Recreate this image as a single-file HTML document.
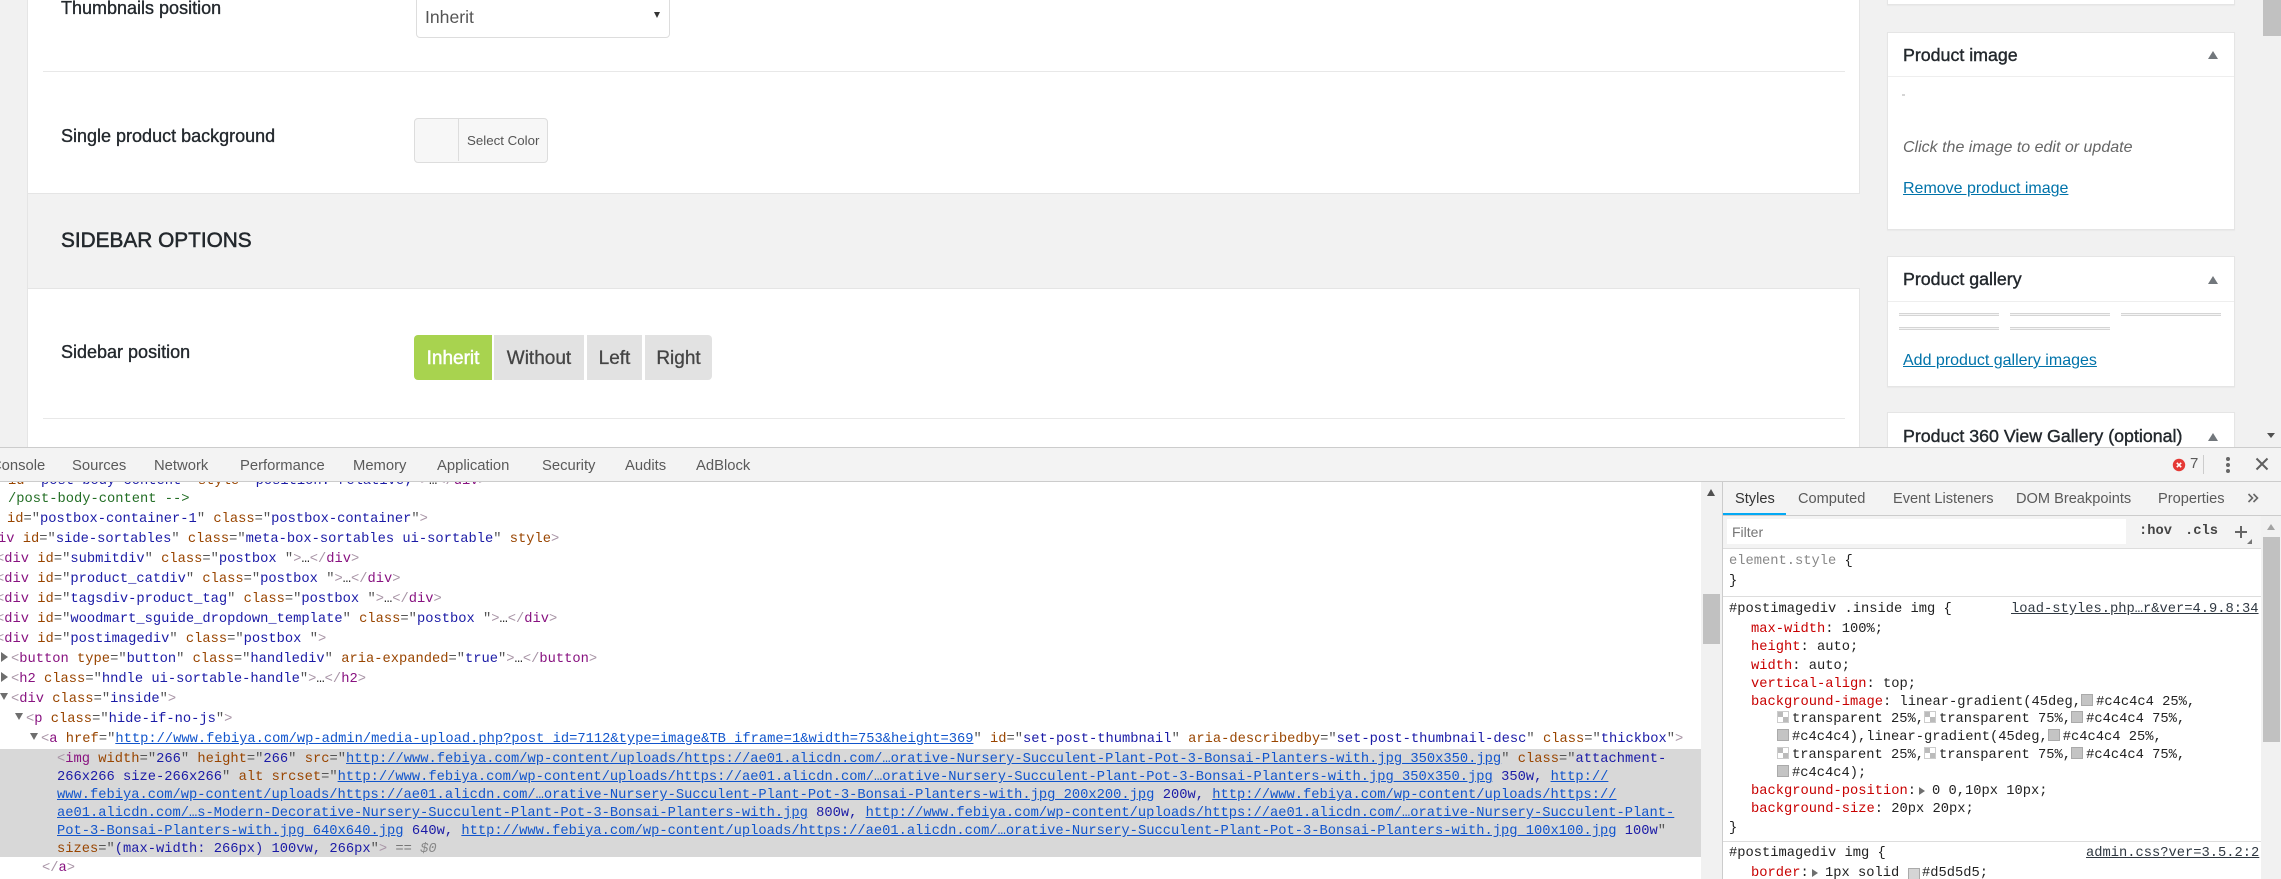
<!DOCTYPE html>
<html><head><meta charset="utf-8"><title>Product</title>
<style>
html,body{margin:0;padding:0;width:2281px;height:879px;overflow:hidden;background:#f1f1f1;}
body{position:relative;font-family:"Liberation Sans",sans-serif;}
.b{position:absolute;box-sizing:border-box;}
.x{position:absolute;white-space:pre;}
.lb{font-size:18px;line-height:24px;color:#23282d;-webkit-text-stroke:.35px #23282d;}
.pt{font-size:17.8px;line-height:24px;color:#23282d;-webkit-text-stroke:.4px #23282d;}
.bt{position:absolute;top:335px;height:45px;background:#e2e2e2;color:#444;font-size:19px;line-height:47px;text-align:center;-webkit-text-stroke:.3px #444;}
.lk{font-size:16px;line-height:22px;color:#0073aa;text-decoration:underline;}
.tab{position:absolute;top:456px;font-size:14.8px;line-height:20px;color:#5a5a5a;white-space:pre;}
.st{position:absolute;top:489px;font-size:14.6px;line-height:20px;color:#5a5a5a;white-space:pre;}
.m{position:absolute;white-space:pre;font-family:"Liberation Mono",monospace;font-size:13.75px;line-height:18px;color:#222;margin-top:1px;}
.t{color:#881280}.a{color:#994500}.v{color:#1a1aa6}.g{color:#a894a6}.q{color:#555}
.l{color:#1155cc;text-decoration:underline}
.p{color:#c80000}
.s{display:inline-block;width:10px;height:10px;border:1px solid #aaa;background:#c4c4c4;margin-right:3px;vertical-align:-1px}
.s.c{background:linear-gradient(#bbb,#bbb) 0 0/50% 50% no-repeat,linear-gradient(#bbb,#bbb) 100% 100%/50% 50% no-repeat,#fff;border-color:#ccc}
.tri{position:absolute;width:0;height:0;border-style:solid;border-color:transparent;}
.bar{position:absolute;height:3px;background:#f4f4f4;border-top:1px solid #d5d5d5;border-bottom:1px solid #d5d5d5;box-sizing:border-box;width:100px;}
.pb{position:absolute;left:1887px;width:348px;background:#fff;border:1px solid #e5e5e5;box-sizing:border-box;box-shadow:0 1px 1px rgba(0,0,0,.04);}
</style></head><body>

<!-- main panel -->
<div class="b" style="left:0;top:0;width:28px;height:447px;background:#f1f1f1;border-right:1px solid #e5e5e5"></div>
<div class="b" style="left:28px;top:0;width:1832px;height:447px;background:#fff;border-right:1px solid #e5e5e5"></div>

<div class="x lb" style="left:61px;top:-4px">Thumbnails position</div>
<div class="b" style="left:416px;top:-5px;width:254px;height:43px;border:1px solid #ddd;border-radius:4px;background:#fff"></div>
<div class="x" style="left:425px;top:6px;font-size:17.6px;line-height:23px;color:#555">Inherit</div>
<div class="tri" style="left:654px;top:12px;border-width:6px 3.5px 0 3.5px;border-top-color:#333"></div>
<div class="b" style="left:43px;top:71px;width:1802px;height:1px;background:#e8e8e8"></div>

<div class="x lb" style="left:61px;top:124px">Single product background</div>
<div class="b" style="left:414px;top:118px;width:134px;height:45px;border:1px solid #ddd;border-radius:4px;background:#f7f7f7"></div>
<div class="b" style="left:458px;top:119px;width:1px;height:42px;background:#ddd"></div>
<div class="x" style="left:467px;top:131px;font-size:13.3px;line-height:20px;color:#555">Select Color</div>

<div class="b" style="left:28px;top:193px;width:1832px;height:96px;background:#f2f2f2;border-top:1px solid #e5e5e5;border-bottom:1px solid #e5e5e5"></div>
<div class="x" style="left:61px;top:227px;font-size:20.8px;line-height:28px;color:#23282d;-webkit-text-stroke:.5px #23282d">SIDEBAR OPTIONS</div>

<div class="x lb" style="left:61px;top:340px">Sidebar position</div>
<div class="bt" style="left:414px;width:78px;background:#a8d34f;color:#fff;border-radius:4px 0 0 4px;-webkit-text-stroke:.45px #fff">Inherit</div>
<div class="bt" style="left:494px;width:90px">Without</div>
<div class="bt" style="left:587px;width:55px">Left</div>
<div class="bt" style="left:645px;width:67px;border-radius:0 4px 4px 0">Right</div>
<div class="b" style="left:43px;top:418px;width:1802px;height:1px;background:#e8e8e8"></div>

<!-- side boxes -->
<div class="pb" style="top:-10px;height:15px"></div>

<div class="pb" style="top:32px;height:198px"></div>
<div class="b" style="left:1888px;top:76px;width:346px;height:1px;background:#eee"></div>
<div class="x pt" style="left:1903px;top:43px">Product image</div>
<div class="tri" style="left:2208px;top:51px;border-width:0 5px 8px 5px;border-bottom-color:#72777c"></div>
<div class="b" style="left:1902px;top:94px;width:3px;height:2px;background:#d5d5d5"></div>
<div class="x" style="left:1903px;top:137px;font-size:16px;line-height:22px;font-style:italic;color:#666">Click the image to edit or update</div>
<div class="x lk" style="left:1903px;top:178px">Remove product image</div>

<div class="pb" style="top:256px;height:131px"></div>
<div class="b" style="left:1888px;top:301px;width:346px;height:1px;background:#eee"></div>
<div class="x pt" style="left:1903px;top:267px">Product gallery</div>
<div class="tri" style="left:2208px;top:276px;border-width:0 5px 8px 5px;border-bottom-color:#72777c"></div>
<div class="bar" style="left:1899px;top:313px"></div>
<div class="bar" style="left:2010px;top:313px"></div>
<div class="bar" style="left:2121px;top:313px"></div>
<div class="bar" style="left:1899px;top:327px"></div>
<div class="bar" style="left:2010px;top:327px"></div>
<div class="x lk" style="left:1903px;top:350px">Add product gallery images</div>

<div class="pb" style="top:412px;height:60px"></div>
<div class="x pt" style="left:1903px;top:424px">Product 360 View Gallery (optional)</div>
<div class="tri" style="left:2208px;top:433px;border-width:0 5px 8px 5px;border-bottom-color:#72777c"></div>

<!-- page scrollbar -->
<div class="b" style="left:2263px;top:0;width:18px;height:36px;background:#c1c1c1"></div>
<div class="tri" style="left:2267px;top:433px;border-width:5px 4.5px 0 4.5px;border-top-color:#505050"></div>

<!-- devtools -->
<div class="b" style="left:0;top:447px;width:2281px;height:432px;background:#fff"></div>

<!-- elements panel -->
<div class="b" style="left:0;top:749px;width:1701px;height:108px;background:#d8d8d8"></div>

<div class="m" style="left:8px;top:472px"><span class="a">id</span><span class="q">="</span><span class="v">post-body-content</span><span class="q">"</span> <span class="a">style</span><span class="q">="</span><span class="v">position: relative;</span><span class="q">"</span><span class="g">&gt;</span>…<span class="g">&lt;/</span><span class="t">div</span><span class="g">&gt;</span></div>
<div class="m" style="left:8px;top:490px;color:#236e25">/post-body-content --&gt;</div>
<div class="m" style="left:7px;top:510px"><span class="a">id</span><span class="q">="</span><span class="v">postbox-container-1</span><span class="q">"</span> <span class="a">class</span><span class="q">="</span><span class="v">postbox-container</span><span class="q">"</span><span class="g">&gt;</span></div>
<div class="m" style="left:-2px;top:530px"><span class="t">iv</span> <span class="a">id</span><span class="q">="</span><span class="v">side-sortables</span><span class="q">"</span> <span class="a">class</span><span class="q">="</span><span class="v">meta-box-sortables ui-sortable</span><span class="q">"</span> <span class="a">style</span><span class="g">&gt;</span></div>
<div class="m" style="left:-4px;top:550px"><span class="g">&lt;</span><span class="t">div</span> <span class="a">id</span><span class="q">="</span><span class="v">submitdiv</span><span class="q">"</span> <span class="a">class</span><span class="q">="</span><span class="v">postbox </span><span class="q">"</span><span class="g">&gt;</span>…<span class="g">&lt;/</span><span class="t">div</span><span class="g">&gt;</span></div>
<div class="m" style="left:-4px;top:570px"><span class="g">&lt;</span><span class="t">div</span> <span class="a">id</span><span class="q">="</span><span class="v">product_catdiv</span><span class="q">"</span> <span class="a">class</span><span class="q">="</span><span class="v">postbox </span><span class="q">"</span><span class="g">&gt;</span>…<span class="g">&lt;/</span><span class="t">div</span><span class="g">&gt;</span></div>
<div class="m" style="left:-4px;top:590px"><span class="g">&lt;</span><span class="t">div</span> <span class="a">id</span><span class="q">="</span><span class="v">tagsdiv-product_tag</span><span class="q">"</span> <span class="a">class</span><span class="q">="</span><span class="v">postbox </span><span class="q">"</span><span class="g">&gt;</span>…<span class="g">&lt;/</span><span class="t">div</span><span class="g">&gt;</span></div>
<div class="m" style="left:-4px;top:610px"><span class="g">&lt;</span><span class="t">div</span> <span class="a">id</span><span class="q">="</span><span class="v">woodmart_sguide_dropdown_template</span><span class="q">"</span> <span class="a">class</span><span class="q">="</span><span class="v">postbox </span><span class="q">"</span><span class="g">&gt;</span>…<span class="g">&lt;/</span><span class="t">div</span><span class="g">&gt;</span></div>
<div class="m" style="left:-4px;top:630px"><span class="g">&lt;</span><span class="t">div</span> <span class="a">id</span><span class="q">="</span><span class="v">postimagediv</span><span class="q">"</span> <span class="a">class</span><span class="q">="</span><span class="v">postbox </span><span class="q">"</span><span class="g">&gt;</span></div>
<div class="tri" style="left:1px;top:652px;border-width:5px 0 5px 7px;border-left-color:#6e6e6e"></div>
<div class="m" style="left:11px;top:650px"><span class="g">&lt;</span><span class="t">button</span> <span class="a">type</span><span class="q">="</span><span class="v">button</span><span class="q">"</span> <span class="a">class</span><span class="q">="</span><span class="v">handlediv</span><span class="q">"</span> <span class="a">aria-expanded</span><span class="q">="</span><span class="v">true</span><span class="q">"</span><span class="g">&gt;</span>…<span class="g">&lt;/</span><span class="t">button</span><span class="g">&gt;</span></div>
<div class="tri" style="left:1px;top:672px;border-width:5px 0 5px 7px;border-left-color:#6e6e6e"></div>
<div class="m" style="left:11px;top:670px"><span class="g">&lt;</span><span class="t">h2</span> <span class="a">class</span><span class="q">="</span><span class="v">hndle ui-sortable-handle</span><span class="q">"</span><span class="g">&gt;</span>…<span class="g">&lt;/</span><span class="t">h2</span><span class="g">&gt;</span></div>
<div class="tri" style="left:0;top:693px;border-width:7px 4.5px 0 4.5px;border-top-color:#6e6e6e"></div>
<div class="m" style="left:11px;top:690px"><span class="g">&lt;</span><span class="t">div</span> <span class="a">class</span><span class="q">="</span><span class="v">inside</span><span class="q">"</span><span class="g">&gt;</span></div>
<div class="tri" style="left:15px;top:713px;border-width:7px 4.5px 0 4.5px;border-top-color:#6e6e6e"></div>
<div class="m" style="left:26px;top:710px"><span class="g">&lt;</span><span class="t">p</span> <span class="a">class</span><span class="q">="</span><span class="v">hide-if-no-js</span><span class="q">"</span><span class="g">&gt;</span></div>
<div class="tri" style="left:30px;top:733px;border-width:7px 4.5px 0 4.5px;border-top-color:#6e6e6e"></div>
<div class="m" style="left:41px;top:730px"><span class="g">&lt;</span><span class="t">a</span> <span class="a">href</span><span class="q">="</span><span class="l">http://www.febiya.com/wp-admin/media-upload.php?post_id=7112&amp;type=image&amp;TB_iframe=1&amp;width=753&amp;height=369</span><span class="q">"</span> <span class="a">id</span><span class="q">="</span><span class="v">set-post-thumbnail</span><span class="q">"</span> <span class="a">aria-describedby</span><span class="q">="</span><span class="v">set-post-thumbnail-desc</span><span class="q">"</span> <span class="a">class</span><span class="q">="</span><span class="v">thickbox</span><span class="q">"</span><span class="g">&gt;</span></div>

<div class="m" style="left:57px;top:750px"><span class="g">&lt;</span><span class="t">img</span> <span class="a">width</span><span class="q">="</span><span class="v">266</span><span class="q">"</span> <span class="a">height</span><span class="q">="</span><span class="v">266</span><span class="q">"</span> <span class="a">src</span><span class="q">="</span><span class="l">http://www.febiya.com/wp-content/uploads/https://ae01.alicdn.com/…orative-Nursery-Succulent-Plant-Pot-3-Bonsai-Planters-with.jpg_350x350.jpg</span><span class="q">"</span> <span class="a">class</span><span class="q">="</span><span class="v">attachment-</span></div>
<div class="m" style="left:57px;top:768px"><span class="v">266x266 size-266x266</span><span class="q">"</span> <span class="a">alt</span> <span class="a">srcset</span><span class="q">="</span><span class="l">http://www.febiya.com/wp-content/uploads/https://ae01.alicdn.com/…orative-Nursery-Succulent-Plant-Pot-3-Bonsai-Planters-with.jpg_350x350.jpg</span><span class="v"> 350w, </span><span class="l">http://</span></div>
<div class="m" style="left:57px;top:786px"><span class="l">www.febiya.com/wp-content/uploads/https://ae01.alicdn.com/…orative-Nursery-Succulent-Plant-Pot-3-Bonsai-Planters-with.jpg_200x200.jpg</span><span class="v"> 200w, </span><span class="l">http://www.febiya.com/wp-content/uploads/https://</span></div>
<div class="m" style="left:57px;top:804px"><span class="l">ae01.alicdn.com/…s-Modern-Decorative-Nursery-Succulent-Plant-Pot-3-Bonsai-Planters-with.jpg</span><span class="v"> 800w, </span><span class="l">http://www.febiya.com/wp-content/uploads/https://ae01.alicdn.com/…orative-Nursery-Succulent-Plant-</span></div>
<div class="m" style="left:57px;top:822px"><span class="l">Pot-3-Bonsai-Planters-with.jpg_640x640.jpg</span><span class="v"> 640w, </span><span class="l">http://www.febiya.com/wp-content/uploads/https://ae01.alicdn.com/…orative-Nursery-Succulent-Plant-Pot-3-Bonsai-Planters-with.jpg_100x100.jpg</span><span class="v"> 100w</span><span class="q">"</span></div>
<div class="m" style="left:57px;top:840px"><span class="a">sizes</span><span class="q">="</span><span class="v">(max-width: 266px) 100vw, 266px</span><span class="q">"</span><span class="g">&gt;</span> <span style="color:#777">==</span> <span style="color:#888;font-style:italic">$0</span></div>
<div class="m" style="left:42px;top:859px"><span class="g">&lt;/</span><span class="t">a</span><span class="g">&gt;</span></div>

<!-- elements scrollbar -->
<div class="b" style="left:1701px;top:482px;width:21px;height:397px;background:#f1f1f1"></div>
<div class="tri" style="left:1707px;top:489px;border-width:0 4.5px 7px 4.5px;border-bottom-color:#505050"></div>
<div class="b" style="left:1703px;top:594px;width:17px;height:50px;background:#c1c1c1"></div>
<div class="b" style="left:1722px;top:482px;width:1px;height:397px;background:#ccc"></div>

<!-- toolbar -->
<div class="b" style="left:0;top:447px;width:2281px;height:35px;background:#f3f3f3;border-top:1px solid #ccc;border-bottom:1px solid #ccc"></div>
<div class="tab" style="left:-9px">Console</div>
<div class="tab" style="left:72px">Sources</div>
<div class="tab" style="left:154px">Network</div>
<div class="tab" style="left:240px">Performance</div>
<div class="tab" style="left:353px">Memory</div>
<div class="tab" style="left:437px">Application</div>
<div class="tab" style="left:542px">Security</div>
<div class="tab" style="left:625px">Audits</div>
<div class="tab" style="left:696px">AdBlock</div>
<svg style="position:absolute;left:2172px;top:458px" width="14" height="14" viewBox="0 0 14 14"><circle cx="7" cy="7" r="6.2" fill="#e53935"/><path d="M4.8 4.8L9.2 9.2M9.2 4.8L4.8 9.2" stroke="#fff" stroke-width="1.6"/></svg>
<div class="x" style="left:2190px;top:454px;font-size:15px;line-height:20px;color:#5a5a5a">7</div>
<div class="b" style="left:2203px;top:455px;width:1px;height:19px;background:#ccc"></div>
<svg style="position:absolute;left:2224px;top:456px" width="8" height="18" viewBox="0 0 8 18"><circle cx="4" cy="3" r="2" fill="#666"/><circle cx="4" cy="9" r="2" fill="#666"/><circle cx="4" cy="15" r="2" fill="#666"/></svg>
<svg style="position:absolute;left:2255px;top:457px" width="14" height="14" viewBox="0 0 14 14"><path d="M1.5 1.5L12.5 12.5M12.5 1.5L1.5 12.5" stroke="#5f5f5f" stroke-width="2"/></svg>

<!-- styles panel -->
<div class="b" style="left:1723px;top:482px;width:558px;height:34px;background:#f3f3f3;border-bottom:1px solid #ccc"></div>
<div class="b" style="left:1723px;top:513px;width:63px;height:2px;background:#03a9f4"></div>
<div class="st" style="left:1735px;color:#333">Styles</div>
<div class="st" style="left:1798px">Computed</div>
<div class="st" style="left:1893px">Event Listeners</div>
<div class="st" style="left:2016px">DOM Breakpoints</div>
<div class="st" style="left:2158px">Properties</div>
<svg style="position:absolute;left:2247px;top:492px" width="12" height="12" viewBox="0 0 12 12"><path d="M1.5 2L5.5 6L1.5 10M6.5 2L10.5 6L6.5 10" fill="none" stroke="#666" stroke-width="1.6"/></svg>
<div class="b" style="left:1723px;top:516px;width:558px;height:33px;background:#f3f3f3;border-bottom:1px solid #ddd"></div>
<div class="b" style="left:1727px;top:519px;width:399px;height:25px;background:#fff"></div>
<div class="x" style="left:1732px;top:522px;font-size:14px;line-height:20px;color:#757575">Filter</div>
<div class="x" style="left:2139px;top:523px;font-family:'Liberation Mono',monospace;font-weight:bold;font-size:13.75px;line-height:18px;color:#444">:hov</div>
<div class="x" style="left:2185px;top:523px;font-family:'Liberation Mono',monospace;font-weight:bold;font-size:13.75px;line-height:18px;color:#444">.cls</div>
<svg style="position:absolute;left:2234px;top:525px" width="14" height="14" viewBox="0 0 14 14"><path d="M7 1V13M1 7H13" stroke="#666" stroke-width="2"/></svg>
<div class="tri" style="left:2247px;top:539px;border-width:0 0 5px 5px;border-bottom-color:#777"></div>

<div class="b" style="left:1723px;top:549px;width:538px;height:330px;background:#fff"></div>

<div class="m" style="left:1729px;top:552px"><span style="color:#888">element.style</span> {</div>
<div class="m" style="left:1729px;top:572px">}</div>
<div class="b" style="left:1723px;top:596px;width:538px;height:1px;background:#ddd"></div>
<div class="m" style="left:1729px;top:600px;color:#222">#postimagediv .inside img {</div>
<div class="m" style="left:2011px;top:600px;color:#303942;text-decoration:underline">load-styles.php…r&amp;ver=4.9.8:34</div>
<div class="m" style="left:1751px;top:620px"><span class="p">max-width</span>: 100%;</div>
<div class="m" style="left:1751px;top:638px"><span class="p">height</span>: auto;</div>
<div class="m" style="left:1751px;top:657px"><span class="p">width</span>: auto;</div>
<div class="m" style="left:1751px;top:675px"><span class="p">vertical-align</span>: top;</div>
<div class="m" style="left:1751px;top:693px"><span class="p">background-image</span>: linear-gradient(45deg,<span class="s"></span>#c4c4c4 25%,</div>
<div class="m" style="left:1777px;top:710px"><span class="s c"></span>transparent 25%,<span class="s c"></span>transparent 75%,<span class="s"></span>#c4c4c4 75%,</div>
<div class="m" style="left:1777px;top:728px"><span class="s"></span>#c4c4c4),linear-gradient(45deg,<span class="s"></span>#c4c4c4 25%,</div>
<div class="m" style="left:1777px;top:746px"><span class="s c"></span>transparent 25%,<span class="s c"></span>transparent 75%,<span class="s"></span>#c4c4c4 75%,</div>
<div class="m" style="left:1777px;top:764px"><span class="s"></span>#c4c4c4);</div>
<div class="m" style="left:1751px;top:782px"><span class="p">background-position</span>:</div>
<div class="tri" style="left:1919px;top:787px;border-width:4px 0 4px 6px;border-left-color:#6e6e6e"></div>
<div class="m" style="left:1932px;top:782px">0 0,10px 10px;</div>
<div class="m" style="left:1751px;top:800px"><span class="p">background-size</span>: 20px 20px;</div>
<div class="m" style="left:1729px;top:819px">}</div>
<div class="b" style="left:1723px;top:841px;width:538px;height:1px;background:#ddd"></div>
<div class="m" style="left:1729px;top:844px">#postimagediv img {</div>
<div class="m" style="left:2086px;top:844px;color:#303942;text-decoration:underline">admin.css?ver=3.5.2:2</div>
<div class="m" style="left:1751px;top:864px"><span class="p">border</span>:</div>
<div class="tri" style="left:1812px;top:869px;border-width:4px 0 4px 6px;border-left-color:#6e6e6e"></div>
<div class="m" style="left:1825px;top:864px">1px solid</div>
<div class="b" style="left:1908px;top:868px;width:12px;height:12px;background:#d5d5d5;border:1px solid #aaa"></div>
<div class="m" style="left:1922px;top:864px">#d5d5d5;</div>

<!-- styles scrollbar -->
<div class="b" style="left:2261px;top:516px;width:20px;height:363px;background:#f1f1f1"></div>
<div class="tri" style="left:2267px;top:524px;border-width:0 4.5px 6px 4.5px;border-bottom-color:#a3a3a3"></div>
<div class="b" style="left:2263px;top:537px;width:17px;height:205px;background:#c1c1c1"></div>
</body></html>
